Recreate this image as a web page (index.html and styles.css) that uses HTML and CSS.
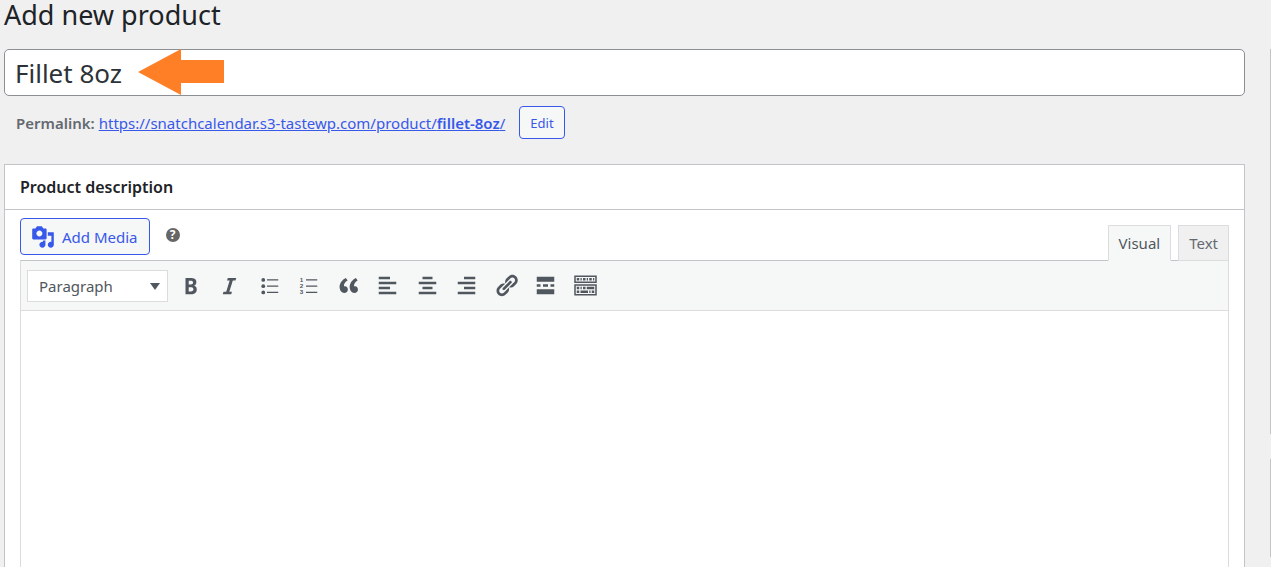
FILE: index.html
```
<!DOCTYPE html>
<html lang="en">

<head>
  <meta charset="utf-8">
  <meta name="viewport" content="width=device-width, initial-scale=1.0">
  <title>Add new product</title>
  <link rel="stylesheet" href="styles.css">
</head>

<body>
  <div class="wrap">
    <h1>Add new product</h1>
    <form class="columns">
      <main class="content">
        <div class="title-box">
          <input type="text" class="title" name="post_title" value="Fillet 8oz" aria-label="Product name"
            spellcheck="false" autocomplete="off">
          <svg class="arrow" viewBox="0 0 86 46" aria-hidden="true">
            <path d="M0 23L43 0v11h43v23H43v12z" />
          </svg>
        </div>
        <div class="permalink">
          <strong>Permalink:</strong>
          <a href="#">https://snatchcalendar.s3-tastewp.com/product/<b>fillet-8oz</b>/</a>
          <button type="button" class="button small">Edit</button>
        </div>

        <section class="postbox">
          <h2>Product description</h2>
          <div class="inside">
            <div class="editor-tools">
              <button type="button" class="button media">
                <svg viewBox="0 0 20 20" aria-hidden="true">
                  <path
                    d="M13 11V4c0-.55-.45-1-1-1h-1.67L9 1H5L3.67 3H2c-.55 0-1 .45-1 1v7c0 .55.45 1 1 1h10c.55 0 1-.45 1-1zM7 4.5c1.38 0 2.5 1.12 2.5 2.5S8.38 9.5 7 9.5 4.5 8.38 4.5 7 5.62 4.5 7 4.5zM14 6h5v10.5c0 1.38-1.12 2.5-2.5 2.5S14 17.88 14 16.5s1.12-2.5 2.5-2.5c.17 0 .34.02.5.05V9h-3V6zm-4 8.05V13h2v3.5c0 1.38-1.12 2.5-2.5 2.5S7 17.88 7 16.5 8.12 14 9.5 14c.17 0 .34.02.5.05z" />
                </svg>
                Add Media
              </button>
              <span class="help" role="img" aria-label="Help">?</span>
              <div class="tabs">
                <button type="button" class="tab active">Visual</button>
                <button type="button" class="tab">Text</button>
              </div>
            </div>
            <div class="editor">
              <div class="toolbar">
                <div class="format">
                  <select name="format" aria-label="Format">
                    <option>Paragraph</option>
                    <option>Heading 1</option>
                    <option>Heading 2</option>
                    <option>Preformatted</option>
                  </select>
                </div>
                <div class="tools">
                  <button type="button" aria-label="Bold">
                    <svg viewBox="0 0 20 20">
                      <path
                        d="M6 4v13h4.54c1.37 0 2.46-.33 3.26-1 .8-.66 1.2-1.58 1.2-2.77 0-.84-.17-1.51-.51-2.01s-.9-.85-1.67-1.03v-.09c.57-.1 1.02-.4 1.36-.9s.51-1.13.51-1.91c0-1.14-.39-1.98-1.17-2.5C12.75 4.26 11.5 4 9.78 4H6zm2.57 5.15V6.26h1.36c.73 0 1.27.11 1.61.32.34.22.51.58.51 1.07 0 .54-.16.92-.47 1.15s-.82.35-1.51.35h-1.5zm0 2.19h1.6c1.44 0 2.16.53 2.16 1.61 0 .6-.17 1.05-.51 1.34s-.86.43-1.57.43H8.57v-3.38z" />
                    </svg>
                  </button>
                  <button type="button" aria-label="Italic">
                    <svg viewBox="0 0 20 20">
                      <path d="M14.78 6h-2.13l-2.8 9h2.12l-.62 2H4.6l.62-2h2.14l2.8-9H8.03l.62-2h6.75z" />
                    </svg>
                  </button>
                  <button type="button" aria-label="Bulleted list">
                    <svg viewBox="0 0 20 20">
                      <circle cx="5" cy="5.5" r="1.5" />
                      <circle cx="5" cy="10.5" r="1.5" />
                      <circle cx="5" cy="15.5" r="1.5" />
                      <path d="M8 5h9v1H8zM8 10h9v1H8zM8 15h9v1H8z" />
                    </svg>
                  </button>
                  <button type="button" aria-label="Numbered list">
                    <svg viewBox="0 0 20 20">
                      <text x="3" y="7">1</text>
                      <text x="3" y="12">2</text>
                      <text x="3" y="17">3</text>
                      <path d="M8 5h9v1H8zM8 10h9v1H8zM8 15h9v1H8z" />
                    </svg>
                  </button>
                  <button type="button" aria-label="Blockquote">
                    <svg viewBox="0 0 20 20">
                      <path
                        d="M9.49 13.22c0-.74-.2-1.38-.61-1.9-.62-.78-1.83-.88-2.53-.72-.29-1.65 1.11-3.75 2.92-4.65L7.88 4c-2.73 1.3-5.42 4.28-4.96 8.05C3.21 14.43 4.59 16 6.54 16c.85 0 1.56-.25 2.12-.75s.83-1.18.83-2.03zm8.05 0c0-.74-.2-1.38-.61-1.9-.63-.78-1.83-.88-2.53-.72-.29-1.65 1.11-3.75 2.92-4.65L15.93 4c-2.73 1.3-5.41 4.28-4.95 8.05.29 2.38 1.66 3.95 3.61 3.95.85 0 1.56-.25 2.12-.75s.83-1.18.83-2.03z" />
                    </svg>
                  </button>
                  <button type="button" aria-label="Align left">
                    <svg viewBox="0 0 20 20">
                      <path d="M12 5V3H3v2h9zm5 4V7H3v2h14zm-5 4v-2H3v2h9zm5 4v-2H3v2h14z" />
                    </svg>
                  </button>
                  <button type="button" aria-label="Align center">
                    <svg viewBox="0 0 20 20">
                      <path d="M14 5V3H6v2h8zm3 4V7H3v2h14zm-3 4v-2H6v2h8zm3 4v-2H3v2h14z" />
                    </svg>
                  </button>
                  <button type="button" aria-label="Align right">
                    <svg viewBox="0 0 20 20">
                      <path d="M17 5V3H8v2h9zm0 4V7H3v2h14zm0 4v-2H8v2h9zm0 4v-2H3v2h14z" />
                    </svg>
                  </button>
                  <button type="button" aria-label="Insert link">
                    <svg viewBox="0 0 20 20">
                      <path
                        d="M17.74 2.76c1.68 1.69 1.68 4.41 0 6.1l-1.53 1.52c-1.12 1.12-2.7 1.47-4.14 1.09l2.62-2.61.76-.77.76-.76c.84-.84.84-2.2 0-3.04-.84-.85-2.2-.85-3.04 0l-.77.76-3.38 3.38c-.37-1.44-.02-3.02 1.1-4.14l1.52-1.53c1.69-1.68 4.42-1.68 6.1 0zM8.59 13.43l5.34-5.34c.42-.42.42-1.1 0-1.52-.44-.43-1.13-.39-1.53 0l-5.33 5.34c-.42.42-.42 1.1 0 1.52.44.43 1.13.39 1.52 0zm-.76 2.29l4.14-4.15c.38 1.44.03 3.02-1.09 4.14l-1.52 1.53c-1.69 1.68-4.41 1.68-6.1 0-1.68-1.68-1.68-4.42 0-6.1l1.53-1.52c1.12-1.12 2.7-1.47 4.14-1.1l-4.14 4.15c-.85.84-.85 2.2 0 3.05.84.84 2.2.84 3.04 0z" />
                    </svg>
                  </button>
                  <button type="button" aria-label="Read more tag">
                    <svg viewBox="0 0 20 20">
                      <path d="M17 7V3H3v4h14zM6 11V9H3v2h3zm6 0V9H8v2h4zm5 0V9h-3v2h3zm0 6v-4H3v4h14z" />
                    </svg>
                  </button>
                  <button type="button" aria-label="Toolbar toggle">
                    <svg viewBox="0 0 20 20">
                      <path fill-rule="evenodd"
                        d="M1 2h18v6H1zM2.2 3.2v3.6h15.6V3.2zM1 9h18v9H1zM2.2 10.2v6.6h15.6v-6.6z" />
                      <path
                        d="M3 4h2v2H3zM6 4h1v2H6zM8 4h2v2H8zM11 4h1v2h-1zM13 4h2v2h-2zM16 4h1v2h-1zM3 11h2v2H3zM6 11h1v2H6zM8 11h2v2H8zM11 11h6v2h-6zM3 14h2v2H3zM6 14h6v2H6zM13 14h1v2h-1zM15 14h2v2h-2z" />
                    </svg>
                  </button>
                </div>
              </div>
              <div class="edit-area" contenteditable="true" role="textbox" aria-label="Product description"></div>
            </div>
          </div>
        </section>
      </main>
      <aside class="side">
        <div class="side-box publish"></div>
        <div class="side-box image"></div>
      </aside>
    </form>
  </div>
</body>

</html>
```
FILE: styles.css
```
* {
  box-sizing: border-box;
}

body {
  font-family: "Noto Sans", "Open Sans", sans-serif;
  font-size: 15px;
  color: #3c434a;
  background: #f0f0f1;
  margin: 0;
  height: 100vh;
  overflow: hidden;
}

button,
input,
select {
  font-family: inherit;
  margin: 0;
}

.wrap {
  padding-left: 4px;
}

h1 {
  font-size: 27px;
  font-weight: 400;
  line-height: 30px;
  color: #1d2327;
  margin: 0 0 19px;
}

.columns {
  display: flex;
  gap: 25px;
}

.content {
  flex: 1;
  min-width: 0;
}

.title-box {
  position: relative;
}

.title {
  display: block;
  width: 100%;
  height: 47px;
  padding: 0 10px;
  font-size: 26px;
  color: #2c3338;
  background: #fff;
  border: 1px solid #8c8f94;
  border-radius: 5px;
}

/* marker over the title field */
.arrow {
  position: absolute;
  left: 134px;
  top: 0;
  width: 86px;
  height: 46px;
  fill: #ff7f27;
}

.permalink {
  display: flex;
  align-items: center;
  gap: 4px;
  padding: 10px 12px 0;
  color: #646970;
}

.permalink strong,
.permalink b {
  font-weight: 600;
}

.permalink a {
  color: #3858e9;
}

.button {
  color: #3858e9;
  background: #f6f7f7;
  border: 1px solid #3858e9;
  border-radius: 4px;
}

.button.small {
  height: 33px;
  margin-left: 10px;
  padding: 0 10px;
  font-size: 13px;
}

.postbox {
  margin-top: 25px;
  background: #fff;
  border: 1px solid #c3c4c7;
}

.postbox h2 {
  margin: 0;
  padding: 0 15px;
  font-size: 16px;
  font-weight: 600;
  line-height: 44px;
  color: #1d2327;
  border-bottom: 1px solid #c3c4c7;
}

.inside {
  padding: 8px 15px 15px;
}

.editor-tools {
  display: flex;
  align-items: flex-start;
}

.button.media {
  display: flex;
  align-items: center;
  gap: 7px;
  height: 37px;
  margin-bottom: 5px;
  padding: 0 11px 0 10px;
  font-size: 15px;
}

.media svg {
  width: 24px;
  height: 24px;
  fill: currentColor;
}

.help {
  width: 14px;
  height: 14px;
  margin: 10px 0 0 16px;
  font-size: 12px;
  font-weight: 700;
  line-height: 14px;
  text-align: center;
  color: #fff;
  background: #666;
  border-radius: 50%;
}

.tabs {
  display: flex;
  align-self: flex-end;
  gap: 7px;
  margin: 0 0 -1px auto;
}

.tab {
  position: relative;
  height: 36px;
  padding: 0 10px;
  font-size: 15px;
  color: #646970;
  background: #f0f0f1;
  border: 1px solid #dcdcde;
}

.tab.active {
  color: #50575e;
  background: #f6f7f7;
  border-bottom-color: #f6f7f7;
}

.editor {
  border: 1px solid #dcdcde;
  border-top-color: #c3c4c7;
}

.toolbar {
  display: flex;
  align-items: center;
  gap: 4px;
  height: 50px;
  padding: 0 6px;
  background: #f6f7f7;
  border-bottom: 1px solid #dcdcde;
}

.format {
  position: relative;
}

.format::after {
  content: "";
  position: absolute;
  right: 8px;
  top: 13px;
  border: 5px solid transparent;
  border-top: 7px solid #50575e;
  border-bottom: 0;
  pointer-events: none;
}

.format select {
  display: block;
  appearance: none;
  width: 141px;
  height: 32px;
  padding: 0 11px;
  font-size: 15px;
  color: #50575e;
  background: #fff;
  border: 1px solid #dcdcde;
  border-radius: 0;
}

.tools {
  display: flex;
  justify-content: space-between;
  width: 431px;
}

.tools button {
  display: flex;
  align-items: center;
  justify-content: center;
  width: 36px;
  height: 36px;
  padding: 0;
  background: none;
  border: 0;
}

.tools svg {
  width: 25px;
  height: 25px;
  fill: #50575e;
}

.tools text {
  font-family: "Liberation Sans", Arial, sans-serif;
  font-size: 5px;
  font-weight: 700;
}

.edit-area {
  min-height: 430px;
  padding: 10px;
  background: #fff;
}

.side {
  display: flex;
  flex: 0 0 1px;
  flex-direction: column;
  gap: 25px;
}

.side-box {
  border-left: 1px solid #c3c4c7;
}

.publish {
  height: 385px;
}

.image {
  height: 98px;
}
```
